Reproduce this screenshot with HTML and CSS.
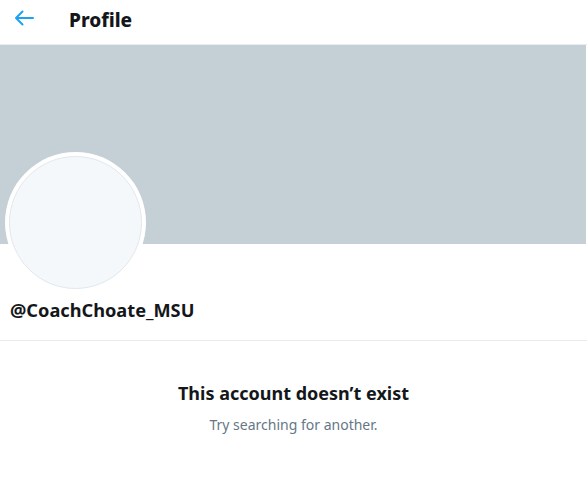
FILE: index.html
```html
<!DOCTYPE html>
<html>
<head>
<meta charset="utf-8">
<link rel="stylesheet" href="styles.css">
</head>
<body>
<div class="page">
  <header class="topbar">
    <div class="back">
      <svg width="20" height="16" viewBox="0 0 20 16"><path d="M2 8H19M8.5 1.5L2 8l6.5 6.5" fill="none" stroke="#1da1f2" stroke-width="2" stroke-linecap="round" stroke-linejoin="round"/></svg>
    </div>
    <h1 class="title">Profile</h1>
  </header>
  <div class="banner"></div>
  <div class="profile">
    <div class="avatar"><div class="avatar-inner"></div></div>
    <div class="handle">@CoachChoate_MSU</div>
  </div>
  <div class="empty">
    <div class="empty-title">This account doesn’t exist</div>
    <div class="empty-sub">Try searching for another.</div>
  </div>
</div>
</body>
</html>
```

FILE: styles.css
```css
html, body { margin: 0; padding: 0; background: #fff; }
body { font-family: "Noto Sans", "Open Sans", sans-serif; color: #14171a; }
.page { width: 587px; }
.topbar { height: 44px; display: flex; align-items: center; border-bottom: 1px solid #e6ecf0; box-sizing: content-box; }
.back { width: 20px; height: 16px; margin-left: 14px; margin-right: 35px; margin-top: -8px; display: flex; }
.title { margin: 0; font-size: 19px; font-weight: 800; margin-top: -5px; }
.banner { height: 199px; background: #c4cfd6; margin-right: 1px; }
.profile { position: relative; height: 96px; border-bottom: 1px solid #e6ecf0; }
.avatar { position: absolute; left: 5px; top: -92px; width: 141px; height: 141px; border-radius: 50%; background: #fff; padding: 4px; box-sizing: border-box; }
.avatar-inner { width: 100%; height: 100%; border-radius: 50%; background: #f5f8fa; border: 1px solid #e1e8ed; box-sizing: border-box; }
.handle { position: absolute; left: 10px; top: 54px; font-size: 18.2px; font-weight: 700; }
.empty { text-align: center; padding-top: 39px; }
.empty-title { font-size: 18px; font-weight: 700; line-height: 26px; }
.empty-sub { font-size: 14px; color: #657786; margin-top: 9px; }
```
